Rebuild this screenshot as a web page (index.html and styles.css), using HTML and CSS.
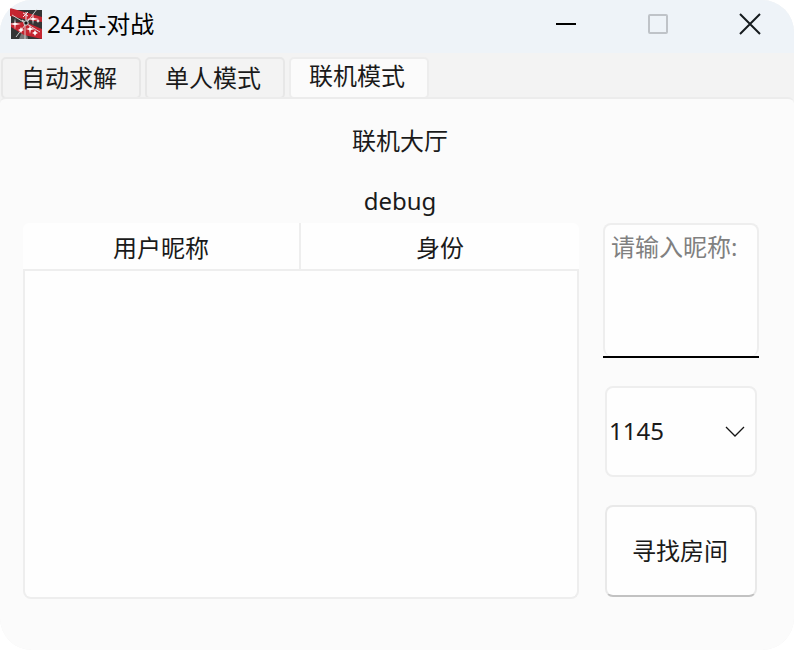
FILE: index.html
```html
<!DOCTYPE html>
<html lang="zh-CN">
<head>
<meta charset="utf-8">
<title>24点-对战</title>
<link rel="stylesheet" href="styles.css">
</head>
<body>
<div class="window">
  <header class="titlebar">
    <svg class="logo" viewBox="0 0 32 32" aria-hidden="true">
      <path fill="#343434" d="M1 2H32V31H1z"/>
      <path fill="#777" d="M9 31L15 17L18 31z"/>
      <path fill="#c52530" d="M0 0L32 9V14L18 12L0 8zM15 14L32 21V31L14 27L1 19V15z"/>
      <path stroke="#ddd" stroke-width="0.9" fill="none" d="M27 1L6 29M2 7L30 24M15 15V31"/>
      <path stroke="#eee" stroke-width="1" fill="none" d="M13 5L18 8M18 4L13 9M16 4V12M12 12L15 14L19 11"/>
      <path fill="#fff" d="M23 5L23.6 10L29 11L23.6 12L23 17L22.4 12L18 11L22.4 10zM5 10L5.6 15L11 16L5.6 17L5 22L4.4 17L0 16L4.4 15zM20 17L20.8 20L25 21L20.8 22L20 26L19.2 22L16 21L19.2 20zM25 22L26 24L28 25L26 26L25 28L24 26L22 25L24 24zM11 19L12 21L14 22L12 23L11 25L10 23L8 22L10 21zM28 11L28.7 12.5L30 13L28.7 13.5L28 15L27.3 13.5L26 13L27.3 12.5z"/>
      <circle cx="16" cy="15" r="2.2" fill="#171717" stroke="#ddd"/>
    </svg>
    <h1 class="title">24点-对战</h1>
    <div class="controls">
      <button type="button" class="control" aria-label="最小化"><svg viewBox="0 0 22 22"><path stroke="#000" stroke-width="2" d="M1 11H21"/></svg></button>
      <button type="button" class="control" aria-label="最大化" disabled><svg viewBox="0 0 22 22"><rect x="2" y="2" width="18" height="18" rx="1" fill="none" stroke="#bfc3c8" stroke-width="2"/></svg></button>
      <button type="button" class="control" aria-label="关闭"><svg viewBox="0 0 22 22"><path stroke="#151a1e" stroke-width="2" d="M1 1L21 21M21 1L1 21"/></svg></button>
    </div>
  </header>
  <nav class="tabs" role="tablist">
    <button type="button" class="tab" role="tab" aria-selected="false">自动求解</button>
    <button type="button" class="tab" role="tab" aria-selected="false">单人模式</button>
    <button type="button" class="tab active" role="tab" aria-selected="true">联机模式</button>
  </nav>
  <main class="panel">
    <h2 class="heading">联机大厅</h2>
    <p class="status">debug</p>
    <div class="lobby">
      <div class="players">
        <table class="player-table">
          <thead><tr><th scope="col">用户昵称</th><th scope="col">身份</th></tr></thead>
          <tbody></tbody>
        </table>
        <div class="player-space"></div>
      </div>
      <form class="side">
        <div class="nickname-field">
          <textarea class="nickname" aria-label="昵称" placeholder="请输入昵称:"></textarea>
        </div>
        <div class="port">
          <select class="port-select" aria-label="端口"><option>1145</option></select>
          <svg class="chevron" viewBox="0 0 20 12" aria-hidden="true"><path fill="none" stroke="#151515" stroke-width="1.3" d="M1 1L10 10L19 1"/></svg>
        </div>
        <button type="button" class="find">寻找房间</button>
      </form>
    </div>
  </main>
</div>
</body>
</html>
```

FILE: styles.css
```css
* { box-sizing: border-box; }

body {
  margin: 0;
  background: #fff;
  color: #1a1a1a;
  font: 400 24px/32px "Noto Sans", "Noto Sans CJK SC", sans-serif;
}

button, select, textarea { font: inherit; color: inherit; margin: 0; }

.window {
  display: flex;
  flex-direction: column;
  min-height: 100vh;
  overflow: hidden;
  border-radius: 32px;
  background: #f3f3f3;
}

.titlebar {
  display: flex;
  align-items: center;
  height: 53px;
  padding: 0 0 5px 10px;
  background: #eef3f8;
}

.logo { width: 32px; height: 32px; }

.title {
  margin: 0 0 0 5px;
  color: #000;
  font-size: 24px;
  font-weight: 400;
}

.controls { display: flex; margin-left: auto; }

.control {
  display: flex;
  align-items: center;
  justify-content: center;
  width: 92px;
  height: 48px;
  padding: 0 0 0 4px;
  border: 0;
  background: transparent;
}

.control svg { width: 22px; height: 22px; }

.tabs {
  display: flex;
  gap: 4px;
  height: 44px;
  padding: 4px 1px 0;
}

.tab {
  width: 140px;
  height: 42px;
  padding: 0 4px 0 0;
  border: 2px solid #e7e7e7;
  border-radius: 5px;
  background: #f3f3f3;
}

.tab.active {
  padding-bottom: 4px;
  border-color: #ededed;
  background: #fbfbfb;
}

.panel {
  display: flex;
  flex: 1;
  flex-direction: column;
  padding: 26px 35px 51px 23px;
  border-top: 2px solid #ececec;
  border-radius: 6px 6px 0 0;
  background: #fbfbfb;
}

.heading, .status {
  margin: 0 0 28px;
  padding-left: 18px;
  font-size: 24px;
  font-weight: 400;
  text-align: center;
}

.status { margin-bottom: 6px; }

.lobby {
  display: grid;
  flex: 1;
  grid-template-columns: 1fr 156px;
  gap: 24px;
}

.players { display: flex; flex-direction: column; }

.player-table {
  width: 100%;
  table-layout: fixed;
  border-collapse: separate;
  border-spacing: 0;
}

.player-table th {
  height: 48px;
  padding: 4px 0 0;
  border-bottom: 2px solid #eee;
  background: #fefefe;
  font-weight: 400;
}

.player-table th:first-child { border-right: 2px solid #eee; border-top-left-radius: 6px; }
.player-table th:last-child { border-top-right-radius: 6px; }

.player-space {
  flex: 1;
  border: 2px solid #eee;
  border-top: 0;
  border-radius: 0 0 8px 8px;
  background: #fefefe;
}

.side {
  display: grid;
  grid-template-rows: 135px 91px 92px;
  align-content: start;
  gap: 28px;
}

.nickname-field { display: flex; border-bottom: 2px solid #000; }

.nickname {
  width: 100%;
  padding: 6px;
  border: 2px solid #eee;
  border-bottom: 0;
  border-radius: 8px;
  background: #fefefe;
  outline: 0;
  resize: none;
}

.nickname::placeholder { color: #808080; opacity: 1; }

.port { display: grid; align-items: center; margin: 0 2px; }

.port-select {
  grid-area: 1 / 1;
  height: 100%;
  padding: 0 2px 2px;
  border: 2px solid #eee;
  border-radius: 8px;
  background: #fefefe;
  appearance: none;
}

.chevron {
  grid-area: 1 / 1;
  justify-self: end;
  width: 20px;
  height: 12px;
  margin-right: 12px;
  pointer-events: none;
}

.find {
  margin: 0 2px;
  padding: 0 2px 0 0;
  border: 2px solid #e9e9e9;
  border-bottom-color: #c2c2c2;
  border-radius: 8px;
  background: #fefefe;
}
```
